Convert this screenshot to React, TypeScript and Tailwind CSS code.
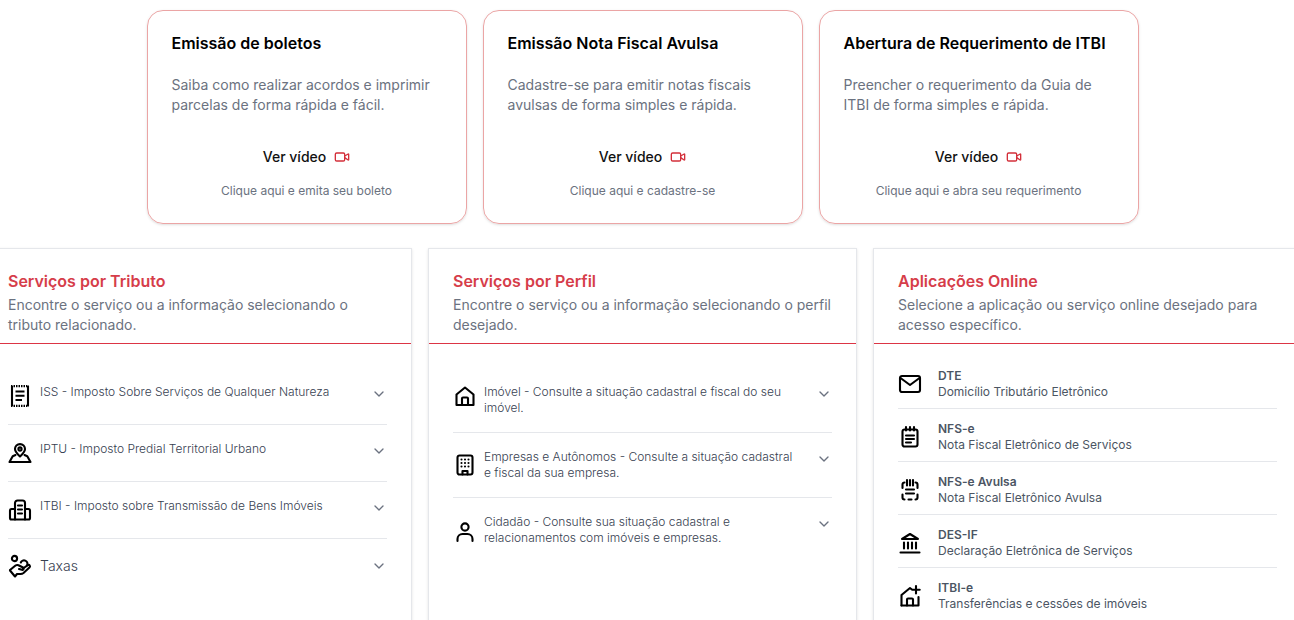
import React from "react";
import { ChevronDown, Video } from "lucide-react";

const I = ({ children, extra = "" }: { children: React.ReactNode; extra?: string }) => (
  <svg viewBox="0 0 24 24" fill="none" stroke="currentColor" strokeWidth={2.1} strokeLinecap="round" strokeLinejoin="round" className={`w-6 h-6 shrink-0 text-black ${extra}`}>
    {children}
  </svg>
);

const Receipt = () => (
  <I>
    <path d="M4 2v20M20 2v20" strokeLinecap="butt" />
    <path d="M3 2.2h18M3 21.8h18" strokeDasharray="1.5 1" strokeLinecap="butt" strokeWidth={2.2} />
    <path d="M7.5 7.5h9M7.5 11.7h9M7.5 16h6.5" strokeLinecap="butt" />
  </I>
);
const Pin = () => (
  <I>
    <path d="M12 15.5c-2.6-2.4-5-4.5-5-7.4a5 5 0 0 1 10 0c0 2.9-2.4 5-5 7.4z" />
    <circle cx="12" cy="8" r="1.6" />
    <path d="M7.5 14l-2.8 1.2L1.5 21h21l-3.2-5.8L16.5 14" />
  </I>
);
const Tower = () => (
  <I>
    <path d="M7 21.5V5a2.5 2.5 0 0 1 2.5-2.5h5A2.5 2.5 0 0 1 17 5v16.5z" />
    <path d="M10 7.5h4M10 11.5h4M10 15.5h4" />
    <path d="M7 11H3.5A1.5 1.5 0 0 0 2 12.5v7.5a1.5 1.5 0 0 0 1.5 1.5H7M17 11h3.5a1.5 1.5 0 0 1 1.5 1.5v7.5a1.5 1.5 0 0 1-1.5 1.5H17" />
  </I>
);
const Hand = () => (
  <I>
    <circle cx="6.5" cy="4.5" r="2.6" />
    <path d="M12.8 8.5a3.4 3.4 0 1 1 6.4 2.6" />
    <path d="M2 16l5.5-4.5c1-.7 2-.7 3-.3l4.5 2.3c1.3.8.5 2.8-1 2.3L11 15" />
    <path d="M15 14.5l4.8-3.3c1.6-.9 3 1 1.6 2.4L15.5 19c-1 .8-2 1-3 1H9l-2 2.5L2 16.5" />
  </I>
);
const House = () => (
  <I>
    <path d="M3.5 21V10.5L12 3.5l8.5 7V21z" />
    <path d="M9 21v-6.5a1 1 0 0 1 1-1h4a1 1 0 0 1 1 1V21" />
  </I>
);
const Building = () => (
  <I>
    <rect x="4.5" y="2.5" width="15" height="19" rx="2" />
    <path d="M8.5 6.5h.01M12 6.5h.01M15.5 6.5h.01M8.5 10h.01M12 10h.01M15.5 10h.01M8.5 13.5h.01M12 13.5h.01M15.5 13.5h.01" />
    <path d="M9.5 21.5v-3.5h5v3.5" />
  </I>
);
const Person = () => (
  <I>
    <circle cx="12" cy="7" r="3.6" />
    <path d="M4.5 21v-2a5 5 0 0 1 5-5h5a5 5 0 0 1 5 5v2" />
  </I>
);
const Mail = () => (
  <I>
    <rect x="2" y="4" width="20" height="16" rx="2" />
    <path d="M2.5 6l9.5 7 9.5-7" />
  </I>
);
const Note = () => (
  <I>
    <rect x="4.5" y="4.5" width="15" height="17" rx="2" />
    <path d="M8 2v3.5M12 2v3.5M16 2v3.5M8 10.5h8M8 14h8M8 17.5h5" />
  </I>
);
const NoteDash = () => (
  <I>
    <path d="M4.5 10V6.5a2 2 0 0 1 2-2M17.5 4.5a2 2 0 0 1 2 2V10M4.5 16.5v3a2 2 0 0 0 2 2M19.5 16.5v3a2 2 0 0 1-2 2M10.5 21.5h3" />
    <path d="M9 2v5.5M12 2v5.5M15 2v5.5M8 11.5h8M8 15.5h8" />
  </I>
);
const Bank = () => (
  <I>
    <path d="M12 3l8 5H4z" />
    <path d="M6 11.5v6M10 11.5v6M14 11.5v6M18 11.5v6M2.5 21.5h19" />
  </I>
);
const HousePlus = () => (
  <I>
    <path d="M3.5 21.5V11L12 4l1.5 1.2" />
    <path d="M3.5 21.5h17V13" />
    <path d="M9 21.5v-6a1 1 0 0 1 1-1h4a1 1 0 0 1 1 1v6M18 2v7.5M14.3 5.8h7.4" />
  </I>
);

const cards = [
  ["Emissão de boletos", "Saiba como realizar acordos e imprimir parcelas de forma rápida e fácil.", "Clique aqui e emita seu boleto"],
  ["Emissão Nota Fiscal Avulsa", "Cadastre-se para emitir notas fiscais avulsas de forma simples e rápida.", "Clique aqui e cadastre-se"],
  ["Abertura de Requerimento de ITBI", "Preencher o requerimento da Guia de ITBI de forma simples e rápida.", "Clique aqui e abra seu requerimento"],
];

const Head = ({ t, d }: { t: string; d: string }) => (
  <>
    <div className="h-[94px] pt-[22px] px-6">
      <h2 className="text-base leading-5 font-semibold text-[#d63d4a]">{t}</h2>
      <p className="text-sm leading-5 mt-1 text-[#6b7280]">{d}</p>
    </div>
    <div className="h-px bg-[#dc3545]" />
  </>
);

const tributos: [React.ReactNode, string, boolean?][] = [
  [<Receipt />, "ISS - Imposto Sobre Serviços de Qualquer Natureza"],
  [<Pin />, "IPTU - Imposto Predial Territorial Urbano"],
  [<Tower />, "ITBI - Imposto sobre Transmissão de Bens Imóveis"],
  [<Hand />, "Taxas", true],
];
const perfis: [React.ReactNode, string, string][] = [
  [<House />, "Imóvel - Consulte a situação cadastral e fiscal do seu imóvel.", "mt-0"],
  [<Building />, "Empresas e Autônomos - Consulte a situação cadastral e fiscal da sua empresa.", "mt-1"],
  [<Person />, "Cidadão - Consulte sua situação cadastral e relacionamentos com imóveis e empresas.", "mt-[6px]"],
];
const apps: [React.ReactNode, string, string][] = [
  [<Mail />, "DTE", "Domicílio Tributário Eletrônico"],
  [<Note />, "NFS-e", "Nota Fiscal Eletrônico de Serviços"],
  [<NoteDash />, "NFS-e Avulsa", "Nota Fiscal Eletrônico Avulsa"],
  [<Bank />, "DES-IF", "Declaração Eletrônica de Serviços"],
  [<HousePlus />, "ITBI-e", "Transferências e cessões de imóveis"],
];

export default function App() {
  return (
    <div className="w-[1294px] h-[620px] overflow-hidden bg-white font-['Inter',sans-serif]">
      <div className="w-[1319px] -ml-[17px]">
        <div className="flex justify-center gap-4 pt-[10px]">
          {cards.map(([t, d, c]) => (
            <div key={t} className="w-[320px] h-[214px] rounded-2xl border border-[#eba5a5] shadow-sm pt-[22px] px-6 flex flex-col">
              <h3 className="text-base leading-5 font-semibold text-black">{t}</h3>
              <p className="text-sm leading-5 text-[#6b7280] mt-[22px]">{d}</p>
              <div className="mt-[32px] flex items-center justify-center gap-2 text-sm leading-5 font-medium text-[#111]">
                Ver vídeo
                <Video className="w-4 h-4 text-[#d32f3a]" strokeWidth={2} />
              </div>
              <p className="mt-[16px] text-center text-xs leading-4 text-[#6b7280]">{c}</p>
            </div>
          ))}
        </div>
        <div className="flex gap-4 mt-6">
          <section className="w-[429px] h-[400px] shrink-0 border border-[#e5e7eb] shadow-sm">
            <Head t="Serviços por Tributo" d="Encontre o serviço ou a informação selecionando o tributo relacionado." />
            <div className="px-6 pt-6">
              {tributos.map(([ic, t, big], i) => (
                <div key={t} className={`h-[57px] flex items-center pb-1 ${i < 3 ? "border-b border-[#e5e7eb]" : ""}`}>
                  <span className={big ? "contents" : "mt-1"}>{ic}</span>
                  <span className={big ? "ml-2 flex-1 text-sm leading-5 font-light text-[#374151]" : "ml-2 flex-1 text-xs leading-4 font-light text-[#374151] -mt-1"}>{t}</span>
                  <ChevronDown className="w-4 h-4 text-[#6b7280]" />
                </div>
              ))}
            </div>
          </section>
          <section className="w-[429px] h-[400px] shrink-0 border border-[#e5e7eb] shadow-sm">
            <Head t="Serviços por Perfil" d="Encontre o serviço ou a informação selecionando o perfil desejado." />
            <div className="px-6 pt-6">
              {perfis.map(([ic, t, m], i) => (
                <div key={t} className={`h-[65px] flex items-start pt-4 ${i < 2 ? "border-b border-[#e5e7eb]" : ""}`}>
                  <span className={m}>{ic}</span>
                  <span className="ml-[7px] flex-1 pr-5 text-xs leading-4 font-light text-[#374151]">{t}</span>
                  <ChevronDown className="w-4 h-4 text-[#6b7280] mt-[2px]" />
                </div>
              ))}
            </div>
          </section>
          <section className="w-[429px] h-[400px] shrink-0 border border-[#e5e7eb] shadow-sm">
            <Head t="Aplicações Online" d="Selecione a aplicação ou serviço online desejado para acesso específico." />
            <div className="px-6 pt-3">
              {apps.map(([ic, t, s], i) => (
                <div key={t} className={`h-[53px] flex items-start gap-4 pt-3 ${i < 4 ? "border-b border-[#e5e7eb]" : ""}`}>
                  <span className="mt-1">{ic}</span>
                  <div className="text-xs leading-4 text-[#4b5563]">
                    <div className="font-semibold">{t}</div>
                    <div>{s}</div>
                  </div>
                </div>
              ))}
            </div>
          </section>
        </div>
      </div>
    </div>
  );
}
